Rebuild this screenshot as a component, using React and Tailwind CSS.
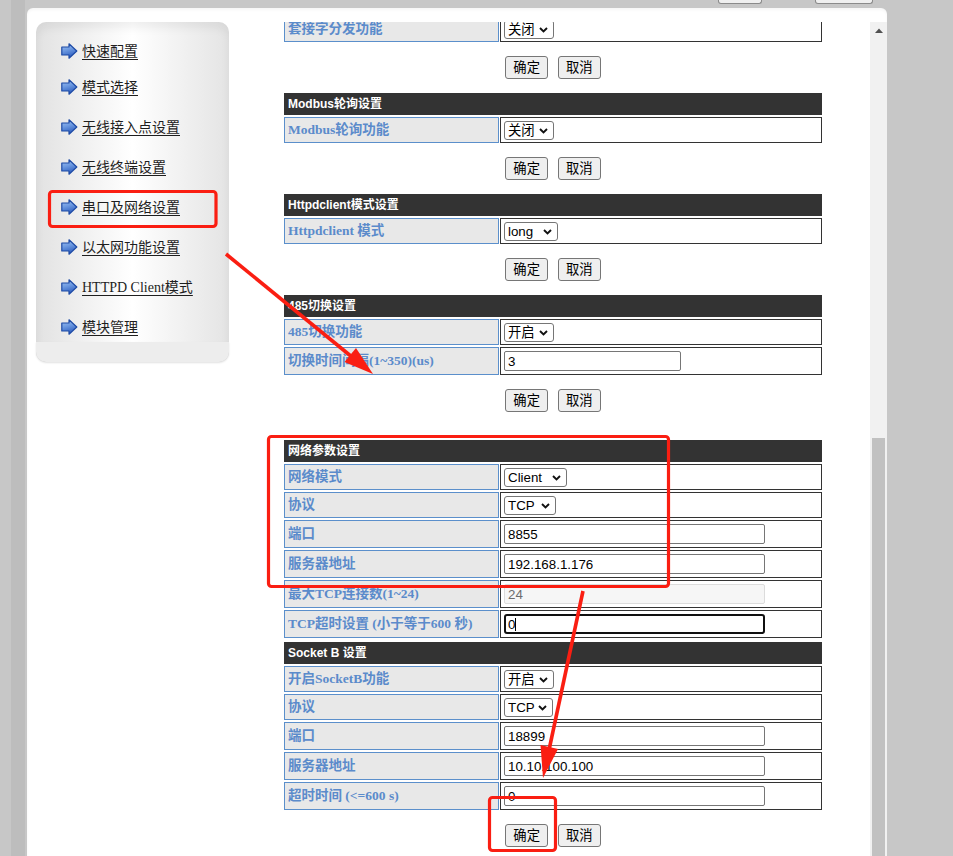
import React from 'react';

const sans = "font-['Liberation_Sans','Noto_Sans_CJK_SC',sans-serif]";
const serif = "font-['Liberation_Serif','Noto_Sans_CJK_SC',serif]";

const menu = [
  '快速配置',
  '模式选择',
  '无线接入点设置',
  '无线终端设置',
  '串口及网络设置',
  '以太网功能设置',
  'HTTPD Client模式',
  '模块管理',
];

const ArrowIcon = ({ id }) => (
  <svg width="17" height="16" viewBox="0 0 17 16" className="shrink-0">
    <defs>
      <linearGradient id={id} x1="0" y1="0" x2="0.3" y2="1">
        <stop offset="0" stopColor="#a9c8f2" />
        <stop offset="0.5" stopColor="#6b98e0" />
        <stop offset="1" stopColor="#2f5fc0" />
      </linearGradient>
    </defs>
    <path
      d="M0.8 4 H8 V0.8 L15.8 8 L8 15.2 V12 H0.8 Z"
      fill={`url(#${id})`}
      stroke="#1d4aa6"
      strokeWidth="1.2"
      strokeLinejoin="round"
    />
  </svg>
);

const Select = ({ value, w }) => (
  <span className="relative inline-flex">
    <select
      defaultValue={value}
      className={`${w} h-[19px] appearance-none rounded-[3px] border border-[#767676] bg-white pl-[3px] text-[13.33px] leading-[17px] text-black ${sans}`}
    >
      <option>{value}</option>
    </select>
    <svg className="pointer-events-none absolute right-[6px] top-[7px]" width="9" height="6" viewBox="0 0 9 6">
      <path d="M1 1l3.5 3.5L8 1" fill="none" stroke="#111" strokeWidth="1.9" />
    </svg>
  </span>
);

const Input = ({ value, w = 'w-[261px]' }) => (
  <input
    defaultValue={value}
    className={`${w} h-[20px] rounded-[2px] border border-[#767676] bg-white px-[3px] text-[13.33px] text-black ${sans}`}
  />
);

const Row = ({ label, tall, children }) => (
  <div className={tall ? 'flex h-[28px] gap-[1px]' : 'flex h-[26px] gap-[1px]'}>
    <div
      className={`flex w-[215px] shrink-0 items-center whitespace-nowrap border border-[#5b8fcb] bg-[#e8e8e8] pl-[3px] text-[13.5px] font-bold text-[#5b8bcb] ${serif}`}
    >
      {label}
    </div>
    <div className="flex flex-1 items-center border border-[#333] bg-white pl-[3px]">{children}</div>
  </div>
);

const Header = ({ children }) => (
  <div className={`flex h-[22px] items-center bg-[#333333] pl-[4px] text-[12px] font-bold text-white ${sans}`}>
    {children}
  </div>
);

const Buttons = () => (
  <div className="mt-[14px] flex justify-center gap-[10px]">
    <button className={`h-[23px] rounded-[3px] border border-[#767676] bg-[#efefef] px-[7px] text-[13.33px] text-black ${sans}`}>
      确定
    </button>
    <button className={`h-[23px] rounded-[3px] border border-[#767676] bg-[#efefef] px-[7px] text-[13.33px] text-black ${sans}`}>
      取消
    </button>
  </div>
);

const Sidebar = () => (
  <div className="flex h-[340px] w-[193px] flex-col rounded-[10px] bg-gradient-to-r from-[#e2e2e2] via-white to-[#e4e4e4] shadow-[inset_0_6px_10px_rgba(0,0,0,0.06)]">
    <div className="flex flex-1 flex-col gap-[20px] pl-[25px] pt-[19px]">
      {menu.map((m, i) => (
        <div key={m} className={i === 0 ? 'flex h-[20px] items-center gap-[4px] -mb-[4px]' : 'flex h-[20px] items-center gap-[4px]'}>
          <ArrowIcon id={`arr${i}`} />
          <span className={`text-[14px] text-[#1e1e1e] underline underline-offset-[3px] ${serif}`}>{m}</span>
        </div>
      ))}
    </div>
    <div className="h-[20px] rounded-b-[10px] bg-[#ededed] shadow-[0_1px_2px_rgba(0,0,0,0.12)]" />
  </div>
);

const Scrollbar = () => (
  <div className="flex w-[17px] shrink-0 flex-col bg-[#f1f1f1]">
    <div className="flex h-[17px] items-center justify-center">
      <svg width="8" height="5" viewBox="0 0 8 5">
        <path d="M0 5 L4 0.5 L8 5 Z" fill="#505050" />
      </svg>
    </div>
    <div className="h-[399px]" />
    <div className="mx-[2px] flex-1 bg-[#c1c1c1]" />
  </div>
);

const Form = () => (
  <div className="-mt-[6px] ml-[44px] flex w-[538px] flex-col">
    <Row label="套接字分发功能">
      <Select value="关闭" w="w-[50px]" />
    </Row>
    <Buttons />

    <div className="mt-[14px] flex flex-col gap-[2px]">
      <Header>Modbus轮询设置</Header>
      <Row label="Modbus轮询功能">
        <Select value="关闭" w="w-[50px]" />
      </Row>
    </div>
    <Buttons />

    <div className="mt-[14px] flex flex-col gap-[2px]">
      <Header>Httpdclient模式设置</Header>
      <Row label="Httpdclient 模式">
        <Select value="long" w="w-[54px]" />
      </Row>
    </div>
    <Buttons />

    <div className="mt-[14px] flex flex-col gap-[2px]">
      <Header>485切换设置</Header>
      <Row label="485切换功能">
        <Select value="开启" w="w-[50px]" />
      </Row>
      <Row label="切换时间间隔(1~350)(us)" tall>
        <Input value="3" w="w-[177px]" />
      </Row>
    </div>
    <Buttons />

    <div className="mt-[28px] flex flex-col gap-[2px]">
      <Header>网络参数设置</Header>
      <Row label="网络模式">
        <Select value="Client" w="w-[63px]" />
      </Row>
      <Row label="协议">
        <Select value="TCP" w="w-[52px]" />
      </Row>
      <Row label="端口" tall>
        <Input value="8855" />
      </Row>
      <Row label="服务器地址" tall>
        <Input value="192.168.1.176" />
      </Row>
      <Row label="最大TCP连接数(1~24)" tall>
        <input
          disabled
          defaultValue="24"
          className={`h-[20px] w-[261px] rounded-[2px] border border-[#dcdcdc] bg-[#f6f6f6] px-[3px] text-[13.33px] text-[#6d6d6d] ${sans}`}
        />
      </Row>
      <Row label="TCP超时设置 (小于等于600 秒)" tall>
        <span className="relative inline-flex">
          <input
            defaultValue="0"
            className={`h-[20px] w-[261px] rounded-[3px] border-2 border-[#101010] bg-white px-[2px] text-[13.33px] text-black ${sans}`}
          />
          <span className="pointer-events-none absolute left-[11px] top-[4px] h-[13px] w-[1px] bg-black" />
        </span>
      </Row>
    </div>

    <div className="mt-[4px] flex flex-col gap-[2px]">
      <Header>Socket B 设置</Header>
      <Row label="开启SocketB功能">
        <Select value="开启" w="w-[50px]" />
      </Row>
      <Row label="协议">
        <Select value="TCP" w="w-[49px]" />
      </Row>
      <Row label="端口" tall>
        <Input value="18899" />
      </Row>
      <Row label="服务器地址" tall>
        <Input value="10.10.100.100" />
      </Row>
      <Row label="超时时间 (<=600 s)" tall>
        <Input value="0" />
      </Row>
    </div>
    <Buttons />
  </div>
);

const Annotations = () => (
  <svg className="pointer-events-none absolute left-0 top-0" width="953" height="856" viewBox="0 0 953 856">
    <g fill="none" stroke="#fa1e12" strokeWidth="3.2">
      <rect x="49.5" y="191.5" width="166.5" height="35" rx="3" />
      <rect x="268.5" y="436.5" width="400" height="150" rx="3" />
      <rect x="489.5" y="797.5" width="66" height="53" rx="3" />
      <line x1="226" y1="254" x2="352" y2="357" strokeWidth="3.6" />
      <line x1="583" y1="591" x2="549" y2="750" strokeWidth="3.6" />
    </g>
    <polygon points="373,374 356,348 344.5,362" fill="#fa1e12" />
    <polygon points="543,778 540.5,745 558,749" fill="#fa1e12" />
  </svg>
);

export default function App() {
  return (
    <div className="relative flex h-[856px] w-[953px] overflow-hidden bg-[#c7c7c7]">
      <div className="w-[11px] shrink-0" />
      <div className="w-[14px] shrink-0 bg-[#bdbdbd]" />
      <div className="w-[2px] shrink-0" />
      <div className="flex w-[860px] shrink-0 flex-col">
        <div className="flex h-[8px] shrink-0 items-start">
          <div className="ml-[691px] h-[4px] w-[44px] rounded-b-[3px] border border-t-0 border-[#8a8a8a] bg-[#efefef]" />
          <div className="ml-[53px] h-[4px] w-[58px] rounded-b-[3px] border border-t-0 border-[#8a8a8a] bg-[#efefef]" />
        </div>
        <div className="flex flex-1 flex-col rounded-t-[6px] bg-white shadow-[inset_0_2px_3px_rgba(0,0,0,0.04)]">
          <div className="h-[14px] shrink-0" />
          <div className="flex min-h-0 flex-1">
            <div className="w-[213px] shrink-0 pl-[9px]">
              <Sidebar />
            </div>
            <div className="min-w-0 flex-1 overflow-hidden">
              <Form />
            </div>
            <Scrollbar />
          </div>
        </div>
      </div>
      <Annotations />
    </div>
  );
}
